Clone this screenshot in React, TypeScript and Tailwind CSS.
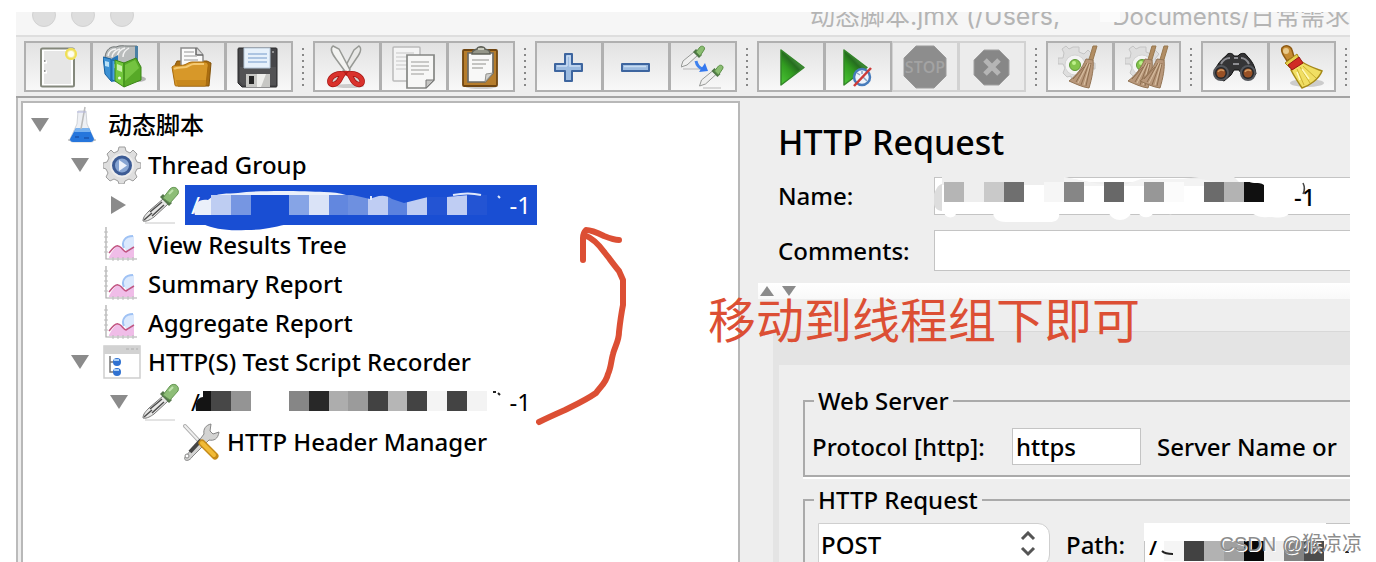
import React from 'react';
import { clsx } from 'clsx';

interface IconProps {
  className?: string;
}

interface SvgProps extends IconProps {
  size?: number;
  children: React.ReactNode;
}

const Svg: React.FC<SvgProps> = ({ size = 44, className, children }) => (
  <svg className={clsx('shrink-0', className)} width={size} height={size} viewBox={`0 0 ${size} ${size}`} fill="none" aria-hidden="true">
    {children}
  </svg>
);

// Toolbar icons, drawn on a 44x44 grid

const NewIcon = () => (
  <Svg>
    <rect x="5" y="3.500" width="33" height="38" rx="1.500" fill="#fff" stroke="#84887c" strokeWidth="2" />
    <rect x="8" y="6" width="27" height="33" fill="#e6e6e6" />
    <path d="M8 17h3M8 27h3" stroke="#fff" strokeWidth="3" />
    <path d="M8 16h1.500M8 26h1.500" stroke="#777" strokeWidth="1.500" />
    <circle cx="35" cy="9" r="6" fill="#f5ec9a" />
    <circle cx="35" cy="9" r="5" stroke="#efdf55" strokeWidth="2" />
    <circle cx="35" cy="9" r="3" fill="#fffef0" />
  </Svg>
);

const TemplatesIcon = () => (
  <Svg>
    <ellipse cx="35" cy="34" rx="8" ry="3" fill="#999" opacity=".7" />
    <path d="M2 12C3 4 8 1 13 2c4-2 8-1 11-1h10v17H14z" fill="#b9bcbc" stroke="#6f7474" />
    <path d="M5 11c1-5 4-7 8-7M9 12c1-5 4-7 8-8M14 12c1-5 4-8 8-9M20 12c0-5 3-7 6-9" stroke="#f2f2f2" strokeWidth="1.500" />
    <path d="M32 1h3v15h-3z" fill="#497fa4" />
    <path d="M0 12l8 2v22l-6-7z" fill="#3c91d4" stroke="#155f9e" />
    <path d="M8 14l7-4v26l-7 1z" fill="#2475b8" />
    <path d="M9 15l7 2v20l-7-2z" fill="#4aa1de" stroke="#1b69a8" />
    <path d="M2 16l4 1v5l-4-1zM11 19l4 1v4l-4-1z" fill="#b9e1f7" />
    <path d="M12 15l9 3v24l-9-6z" fill="#73c83d" stroke="#3d8a18" />
    <path d="M21 18l12-5 5 9v13l-17 7z" fill="#57a927" stroke="#3b8717" />
    <path d="M22 20l10-5 4 8-14 13z" fill="#80cf4c" opacity=".7" />
    <path d="M14 19l5 2v6l-5-2z" fill="#c9f2aa" />
    <circle cx="16.500" cy="33" r="1.500" fill="#efffe4" />
  </Svg>
);

const OpenIcon = () => (
  <Svg>
    <path d="M5 20l2-4h30l4 2-2 23H8z" fill="#a96e12" stroke="#835208" />
    <path d="M11 3h16l6 7v15H11z" fill="#fafafa" stroke="#8c8c8c" strokeWidth="1.500" />
    <path d="M26 3v7h7" fill="#ddd" stroke="#666" strokeWidth="1.500" />
    <path d="M14 7h10M14 11h13M14 15h14" stroke="#b8b8b8" strokeWidth="1.500" />
    <path d="M2 22c3-3 8-1 12-2 3-1 5-3 8-3h12c3 0 5 2 4 5l-2 18c0 1-1 1-2 1H7c-1 0-2 0-2-1z" fill="#d79829" stroke="#a76a0c" />
    <path d="M4 24c3-2 8-1 12-2 3-1 5-3 8-3h10" stroke="#f5c970" strokeWidth="2" />
    <path d="M6 35h30l-1 5H7z" fill="#b9770f" opacity=".5" />
  </Svg>
);

const SaveIcon = () => (
  <Svg>
    <path d="M2 3h37c1 0 1 1 1 1v37c0 1-1 1-1 1H5l-4-4V4c0-1 1-1 1-1z" fill="#464649" stroke="#29292b" />
    <path d="M3 22h36v18H6l-3-3z" fill="#5d5d60" opacity=".5" />
    <path d="M7 3h26v20H7z" fill="#e7f1fb" stroke="#b6c7d8" />
    <path d="M11 9h19M11 13h19M11 17h19" stroke="#9bb6da" strokeWidth="1.500" />
    <path d="M9 29h24v13H9z" fill="#c7c7c4" />
    <path d="M20 29h9l-5 13h-4z" fill="#efefec" />
    <rect x="12" y="31" width="5" height="8" fill="#262626" />
    <circle cx="36" cy="7" r="1" fill="#aaa" />
  </Svg>
);

const CutIcon = () => (
  <Svg>
    <ellipse cx="24" cy="41" rx="15" ry="2" fill="#ccc" />
    <path d="M34 1c4 3 0 9-3 13L21 29l-3-3L29 5z" fill="#e9e9e7" stroke="#979995" strokeWidth="1.500" />
    <path d="M8 1c-4 3 0 9 3 13l11 15 3-4L14 4z" fill="#f3f3f1" stroke="#979995" strokeWidth="1.500" />
    <path d="M16 28c3-3 7-3 11 0l-5 3z" fill="#c4211d" />
    <path d="M18 29c-5-1-11 1-13 6-1 4 2 5 5 4 5-1 5-7 8-10zM24 29c5-1 11 1 13 6 1 4-2 5-5 4-5-1-5-7-8-10z" fill="#d4d4d2" stroke="#a71916" strokeWidth="5.500" strokeLinejoin="round" />
    <path d="M18 29c-5-1-11 1-13 6-1 4 2 5 5 4 5-1 5-7 8-10zM24 29c5-1 11 1 13 6 1 4-2 5-5 4-5-1-5-7-8-10z" stroke="#d9322c" strokeWidth="4" strokeLinejoin="round" />
  </Svg>
);

const CopyIcon = () => (
  <Svg>
    <rect x="1" y="2" width="27" height="34" rx="1" fill="#f4f4f4" stroke="#bababa" strokeWidth="1.500" />
    <path d="M4 8h18M4 12h12M4 16h12M4 20h12M4 24h10" stroke="#d5d5d5" strokeWidth="1.500" />
    <path d="M15 10h27v25l-8 8H15z" fill="#f7f7f6" stroke="#858784" strokeWidth="1.700" />
    <path d="M34 43v-8h8z" fill="#c5c5c3" stroke="#777" />
    <path d="M19 17h18M19 21h18M19 25h18M19 29h13" stroke="#babab8" strokeWidth="1.500" />
  </Svg>
);

const PasteIcon = () => (
  <Svg>
    <ellipse cx="22" cy="42" rx="15" ry="2" fill="#ccc" />
    <rect x="4" y="5" width="34" height="36" rx="1" fill="#b67d2c" stroke="#704611" strokeWidth="1.800" />
    <path d="M9 8h25v20l-8 9H9z" fill="#f8f8f7" stroke="#6b6b67" strokeWidth="1.700" />
    <path d="M26 37l1-8 7-1z" fill="#d0d0cd" stroke="#94948e" />
    <path d="M13 15h17M13 19h14M13 23h11" stroke="#b3b3b0" strokeWidth="1.500" />
    <path d="M13 9c0-4 3-4 5-5 1-3 7-3 8 0 3 1 5 1 5 5z" fill="#949689" stroke="#5f6158" strokeWidth="1.500" />
    <path d="M19 4h6" stroke="#c9cbbf" strokeWidth="2" />
  </Svg>
);

const AddIcon = () => (
  <Svg>
    <path d="M18 9h7v10h10v7H25v10h-7V26H8v-7h10z" fill="#9cbbe0" stroke="#3d659f" strokeWidth="2" strokeLinejoin="round" />
    <path d="M20 11h3v10h10M10 21h10M20 11v10" stroke="#c7dcf2" strokeWidth="1.500" />
  </Svg>
);

const RemoveIcon = () => (
  <Svg>
    <rect x="8" y="19" width="27" height="7" fill="#9cbbe0" stroke="#3d659f" strokeWidth="2" strokeLinejoin="round" />
    <path d="M10 21.500h22" stroke="#c7dcf2" strokeWidth="1.500" />
  </Svg>
);

const ToggleIcon = () => (
  <Svg>
    <path d="M2 24h18M22 43h18" stroke="#b7b7b7" />
    <g>
      <path d="M0 22l2-6 11-9 4 3L6 20z" fill="#f0f0ef" stroke="#979997" />
      <path d="M12 7l3-3 6 6-3 3z" fill="#4e7546" />
      <path d="M15 7l4-5c2-2 6 0 4 3l-4 6z" fill="#8bbd72" stroke="#5c9147" />
    </g>
    <g transform="translate(18.500 19)">
      <path d="M0 22l2-6 11-9 4 3L6 20z" fill="#f0f0ef" stroke="#979997" />
      <path d="M12 7l3-3 6 6-3 3z" fill="#4e7546" />
      <path d="M15 7l4-5c2-2 6 0 4 3l-4 6z" fill="#8bbd72" stroke="#5c9147" />
    </g>
    <path d="M15 16c1 5 3 7 7 8" stroke="#3f82ee" strokeWidth="3" />
    <path d="M24 18l3 8-9 1z" fill="#3478ef" />
  </Svg>
);

const PlayGradient: React.FC<{ id: string }> = ({ id }) => (
  <defs>
    <linearGradient id={id} x1="0" y1="1" x2=".7" y2="0">
      <stop stopColor="#4cc936" />
      <stop offset=".45" stopColor="#319b20" />
      <stop offset=".65" stopColor="#256e1f" />
      <stop offset="1" stopColor="#79b970" />
    </linearGradient>
  </defs>
);

const StartIcon = () => (
  <Svg>
    <PlayGradient id="start" />
    <path d="M12 5v35l23-17.500z" fill="url(#start)" stroke="#338629" strokeWidth="1.500" strokeLinejoin="round" />
  </Svg>
);

const StartNoPausesIcon = () => (
  <Svg>
    <PlayGradient id="startNoPauses" />
    <path d="M8 5v35l23-17.500z" fill="url(#startNoPauses)" stroke="#338629" strokeWidth="1.500" strokeLinejoin="round" />
    <circle cx="26" cy="32" r="8" fill="#eef4fb" stroke="#477bbb" strokeWidth="2.500" />
    <path d="M21 28l3 2M26 26v3M27 32l4 4M22 36l2-1" stroke="#8aa3c0" strokeWidth="1.500" />
    <path d="M18 41l17-18" stroke="#cc3b39" strokeWidth="2.500" />
  </Svg>
);

const StopIcon = () => (
  <Svg>
    <path d="M13 1h18l12 12v18L31 43H13L1 31V13z" fill="#8d8d8d" stroke="#9a9a9a" />
    <text x="22" y="28" textAnchor="middle" fontSize="16" fontWeight="600" fontFamily="Open Sans, Liberation Sans, sans-serif" fill="#a3a3a3">
      STOP
    </text>
  </Svg>
);

const ShutdownIcon = () => (
  <Svg>
    <path d="M14 5h15l10 10v15L29 40H14L4 30V15z" fill="#878787" stroke="#a0a0a0" />
    <path d="M15 15l14 14M29 15L15 29" stroke="#b5b5b5" strokeWidth="5" />
  </Svg>
);

const Cog = () => (
  <g>
    <path d="M15 2h6v5l5 2 4-4 4 4-4 5 2 4h5v6h-5l-2 5 3 4-4 4-4-3-5 2H14l-1-5-4 1-4-4 2-5-2-4H0v-6h5l1-5-2-4 4-3 3 3 4-2z" fill="#dedede" stroke="#c4c4c4" />
    <circle cx="17" cy="20" r="10" fill="#f4f4f4" stroke="#d4d4d4" />
    <circle cx="17" cy="20" r="5.500" fill="#84c54c" stroke="#5e9a34" />
    <circle cx="16" cy="18" r="2" fill="#bff18c" />
  </g>
);

const Besom: React.FC<{ x: number }> = ({ x }) => (
  <g transform={`translate(${x} 0)`}>
    <path d="M35 1h4l-5 17h-4z" fill="#b18d63" stroke="#98784f" />
    <path d="M28 14l7 1c1 8-1 18-4 28-7-1-13-4-20-7 8-6 13-13 17-22z" fill="#b8977a" stroke="#937454" />
    <path d="M29 18L18 37M31 18l-8 22M33 18l-5 23M26 22L15 34" stroke="#8f6f50" />
    <path d="M30 18L20 38M32 19l-6 21" stroke="#dbc3a5" />
  </g>
);

const ClearIcon = () => (
  <Svg>
    <Cog />
    <Besom x={0} />
  </Svg>
);

const ClearAllIcon = () => (
  <Svg>
    <Cog />
    <Besom x={-8} />
    <Besom x={4} />
  </Svg>
);

const SearchIcon = () => (
  <Svg>
    <path d="M13 11c2-4 7-3 8 0h4c2-3 7-4 9 0 5 5 8 10 9 18l-7 6-7-5-3-5h-5l-3 5-7 6-9-4c-3-6 5-17 11-21z" fill="#343436" stroke="#111" />
    <path d="M8 19c2-4 5-6 9-6M36 19c-2-4-4-6-8-6M21 13h4M20 19h6" stroke="#8d8d92" strokeWidth="2" />
    <circle cx="8" cy="28" r="7" fill="#25272a" stroke="#54565b" strokeWidth="2" />
    <circle cx="8" cy="28" r="4.500" fill="#985126" />
    <path d="M5 27c1-2 4-3 6-1" stroke="#d39a61" strokeWidth="1.500" />
    <circle cx="35" cy="28" r="7" fill="#25272a" stroke="#54565b" strokeWidth="2" />
    <circle cx="35" cy="28" r="4.500" fill="#985126" />
    <path d="M32 27c1-2 4-3 6-1" stroke="#d39a61" strokeWidth="1.500" />
  </Svg>
);

const ResetSearchIcon = () => (
  <Svg>
    <ellipse cx="27" cy="38" rx="17" ry="4" fill="#bbb" opacity=".7" />
    <path d="M2 3c3-4 9-2 10 2l2 7-7 4c-2-4-7-9-5-13z" fill="#c58a32" stroke="#8e5a13" strokeWidth="1.500" />
    <circle cx="6" cy="6" r="3" fill="#e8c98b" />
    <path d="M5 18l12-9 3 6-10 8z" fill="#e6ce4b" stroke="#a28617" />
    <path d="M22 17c6 4 12 6 20 9-3 8-13 15-20 17-4-6-8-12-11-18z" fill="#f1df63" stroke="#a68a17" strokeWidth="1.500" />
    <path d="M17 24l7 16M20 22l10 16M23 21l13 12" stroke="#ccb133" />
    <path d="M17 27l3 8M22 24l7 10" stroke="#fff9ba" strokeWidth="1.500" />
    <path d="M8 20l11-8 4 6-11 7z" fill="#d02c25" stroke="#991815" />
  </Svg>
);

// Tree icons, drawn on a 38x38 grid

const TestPlanIcon = () => (
  <Svg size={38}>
    <ellipse cx="19" cy="34" rx="14" ry="2" fill="#a9a9a9" />
    <path d="M15 5h8l1 13 7 15c0 3-2 3-3 3H10c-2 0-3-1-3-3l7-15z" fill="#eef0f4" stroke="#d0d3d8" />
    <path d="M13 22h13l5 11c0 2-2 3-3 3H10c-2 0-3-1-3-3z" fill="#2676dc" />
    <path d="M13 22h13l2 4H11z" fill="#79b2ef" />
    <path d="M12 31h4M21 32h5" stroke="#1c5cba" strokeWidth="2" />
    <path d="M22 1l-4 22" stroke="#bbb" strokeWidth="1.500" />
    <path d="M14 6h9" stroke="#b5b8e0" />
  </Svg>
);

const ThreadGroupIcon = () => (
  <Svg size={38}>
    <path d="M16 1h6l1 4 4 2 3-3 4 4-2 4 2 4 4 1v5l-4 1-2 4 2 4-4 4-4-2-4 2-1 3h-5l-1-3-4-2-4 2-4-4 2-4-2-4-3-1v-5l4-1 2-4-2-4 4-4 3 3 4-2z" fill="#dedede" stroke="#9d9d9d" />
    <circle cx="19" cy="19.500" r="12" fill="#ececec" />
    <circle cx="19" cy="19.500" r="8.500" fill="#87a5d3" stroke="#3c5b94" strokeWidth="3" />
    <path d="M16 14v11l8-5.500z" fill="#eef3fb" />
  </Svg>
);

const SamplerIcon = () => (
  <Svg size={38}>
    <path d="M3 37h30" stroke="#c8c8c8" />
    <path d="M1 35c0-4 3-7 6-10l14-12 5 5-14 13c-3 2-7 5-11 4z" fill="#e7e7e6" stroke="#777" />
    <path d="M2 34l8-7M10 30l12-11M8 26l12-10" stroke="#4d4d4d" strokeWidth="1.500" />
    <path d="M18 11l3-3 9 9-3 3z" fill="#55774c" />
    <path d="M21 12l7-9c4-4 10 0 8 5l-8 9z" fill="#8dbd77" stroke="#659653" />
    <path d="M27 8l4-4" stroke="#bfe2ad" strokeWidth="2" />
  </Svg>
);

const ReportIcon = () => (
  <Svg size={38}>
    <path d="M6 31c3-6 6-9 8-11l8 5 9-4v11H6z" fill="#f0bde8" />
    <path d="M31 10c-8 0-12 6-9 13l3 3 6-4z" fill="#dbe9fd" />
    <path d="M30 10c-8 0-12 6-9 12" stroke="#9fc2f4" strokeWidth="2" />
    <path d="M6 27c4-5 7-8 9-7 3 0 6 6 8 6l8-5" stroke="#c25482" strokeWidth="1.500" />
    <path d="M3 1v32h31" stroke="#aaa" strokeWidth="1.200" />
    <path d="M1 6h4M1 11h4M1 16h4M1 21h4M1 26h4M10 31v4M15 31v4M20 31v4M25 31v4M30 31v4" stroke="#bcbcbc" />
  </Svg>
);

const RecorderIcon = () => (
  <Svg size={38}>
    <rect x="1" y="3" width="36" height="32" fill="#fff" stroke="#cecece" strokeWidth="1.500" />
    <rect x="1" y="3" width="36" height="8" fill="#d2d2d2" />
    <path d="M23 6h3M28 6h3M33 6h2" stroke="#bbb" strokeWidth="1.500" />
    <path d="M7 13v16h5M7 19h5" stroke="#777" strokeWidth="1.500" />
    <circle cx="14" cy="19" r="4" fill="#2f71d1" />
    <circle cx="14" cy="29" r="4" fill="#2f71d1" />
    <path d="M11 17h5M11 27h5" stroke="#a9cef6" strokeWidth="2" />
  </Svg>
);

const HeaderManagerIcon = () => (
  <Svg size={38}>
    <path d="M3 3l15 16" stroke="#aaa" strokeWidth="4" strokeLinecap="round" />
    <path d="M3 3l15 16" stroke="#efefef" strokeWidth="2" strokeLinecap="round" />
    <path d="M3 34l13-15 6-8c-1-5 2-9 7-10l-1 7 3 3 6-2c-1 7-5 9-10 8L10 34c-3 5-9 4-7 0z" fill="#d3d3d2" stroke="#868686" />
    <path d="M8 29l11-12" stroke="#454545" strokeWidth="4" />
    <circle cx="5" cy="33" r="2" fill="#fff" stroke="#888" />
    <path d="M20 20l13 13" stroke="#c58b19" strokeWidth="7" strokeLinecap="round" />
    <path d="M20 20l12 12" stroke="#f1bb37" strokeWidth="4" strokeLinecap="round" />
  </Svg>
);

interface ToolItem {
  label: string;
  icon: React.FC;
  disabled?: boolean;
}

const toolGroups: ToolItem[][] = [
  [
    { label: 'New', icon: NewIcon },
    { label: 'Templates', icon: TemplatesIcon },
    { label: 'Open', icon: OpenIcon },
    { label: 'Save', icon: SaveIcon },
  ],
  [
    { label: 'Cut', icon: CutIcon },
    { label: 'Copy', icon: CopyIcon },
    { label: 'Paste', icon: PasteIcon },
  ],
  [
    { label: 'Expand All', icon: AddIcon },
    { label: 'Collapse All', icon: RemoveIcon },
    { label: 'Toggle', icon: ToggleIcon },
  ],
  [
    { label: 'Start', icon: StartIcon },
    { label: 'Start no pauses', icon: StartNoPausesIcon },
    { label: 'Stop', icon: StopIcon, disabled: true },
    { label: 'Shutdown', icon: ShutdownIcon, disabled: true },
  ],
  [
    { label: 'Clear', icon: ClearIcon },
    { label: 'Clear All', icon: ClearAllIcon },
  ],
  [
    { label: 'Search', icon: SearchIcon },
    { label: 'Reset Search', icon: ResetSearchIcon },
  ],
];

const ToolSeparator = () => (
  <div className="flex w-5 shrink-0 flex-col items-center gap-1">
    {[0, 1, 2, 3, 4, 5, 6].map((dot) => (
      <span key={dot} className="h-0.5 w-0.5 bg-[#888]" />
    ))}
  </div>
);

const Toolbar = () => (
  <div className="flex shrink-0 items-center overflow-hidden border-b-2 border-[#a3a3a3] bg-[#eee] pt-1 pb-1 pl-2">
    {toolGroups.map((group, index) => (
      <React.Fragment key={index}>
        <div className="flex shrink-0 pl-px">
          {group.map(({ label, icon: Icon, disabled }) => (
            <button
              key={label}
              type="button"
              aria-label={label}
              disabled={disabled}
              className={clsx(
                '-ml-px flex h-[51px] w-17 items-center justify-center border-2',
                disabled
                  ? 'border-[#d2d2d2] bg-[#ececec]'
                  : 'relative border-[#b0b0b0] bg-linear-to-b from-[#e2e2e2] to-[#f8f8f8]'
              )}
            >
              <Icon />
            </button>
          ))}
        </div>
        <ToolSeparator />
      </React.Fragment>
    ))}
  </div>
);

const TitleBar = () => (
  <div className="flex h-[25px] shrink-0 items-end justify-between overflow-hidden border-b-2 border-[#dedede] bg-[#f6f6f6]">
    <div className="mb-2 flex gap-[15px] pl-4">
      {[0, 1, 2].map((dot) => (
        <span key={dot} className="h-6 w-6 rounded-full border border-[#d2d2d2] bg-[#dedede]" />
      ))}
    </div>
    <div className="flex font-['Inter','Noto_Sans_CJK_SC',sans-serif] text-[25px] leading-9 whitespace-nowrap text-[#b4b4b4]">
      <span>动态脚本.jmx (/Users,</span>
      <span className="relative ml-[52px]">
        <span className="text-2xl leading-9">Documents/</span>日常需求
        <span className="absolute top-0 -left-3 h-6 w-5 bg-[#fbfbfb]" />
      </span>
    </div>
  </div>
);

interface Cell {
  x: number;
  w?: number;
  fill: string;
}

const selectedCells: Cell[] = [
  { x: 26, fill: '#becdf2' },
  { x: 46, fill: '#7696e2' },
  { x: 104, fill: '#86a4e6' },
  { x: 124, fill: '#dae3f7' },
  { x: 144, fill: '#6287df' },
  { x: 163, fill: '#6e90e0' },
  { x: 183, fill: '#bfcdf3' },
  { x: 203, fill: '#5b82df' },
  { x: 222, fill: '#bfcdf3' },
  { x: 242, fill: '#2354d3' },
  { x: 262, fill: '#bfcdf3' },
  { x: 282, fill: '#2354d3' },
];

const recordedCells: Cell[] = [
  { x: 26, fill: '#474747' },
  { x: 46, fill: '#949494' },
  { x: 104, fill: '#868686' },
  { x: 124, fill: '#282828' },
  { x: 144, fill: '#adadad' },
  { x: 163, fill: '#9b9b9b' },
  { x: 183, fill: '#424242' },
  { x: 203, fill: '#b6b6b6' },
  { x: 222, fill: '#434343' },
  { x: 242, fill: '#f4f4f4' },
  { x: 262, fill: '#434343' },
  { x: 282, fill: '#f3f3f3' },
];

const Cells: React.FC<{ cells: Cell[]; y: number }> = ({ cells, y }) => (
  <>
    {cells.map(({ x, w = 20, fill }) => (
      <rect key={x} x={x} y={y} width={w} height="20" fill={fill} />
    ))}
  </>
);

// Sampler paths with the host and route hidden behind a mosaic
const SelectedPath = () => (
  <span className="relative flex h-10 w-[352px] items-center justify-between bg-[#194ed3] px-1.5 text-white">
    <span>/</span>
    <span>-1</span>
    <svg className="absolute top-0 left-0" width="352" height="46" viewBox="0 0 352 46" aria-hidden="true">
      <path d="M18 39h86c-13 2-21 6-43 6-19 1-32-1-43-6z" fill="#194ed3" />
      <path d="M10 30c-4-9 3-17 13-15 8-8 20-6 30-7 22-3 65-2 86-1 8 0 16 1 22 3v3H66v17z" fill="#ebf0fa" />
      <path d="M66 10h94v20H66z" fill="#194ed3" />
      <Cells cells={selectedCells} y={10} />
      <path d="M163 9l22 5c5-2 14-6 22 0l12 4 24-6h19l22-2V6H163z" fill="#194ed3" />
      <path d="M186 11v4M268 10c10-2 20-2 28 0M313 11l2 2" stroke="#dfe8fb" strokeWidth="2" fill="none" />
    </svg>
  </span>
);

const RecordedPath = () => (
  <span className="relative flex h-10 w-[352px] items-center justify-between px-1.5">
    <span>/</span>
    <span>-1</span>
    <svg className="absolute top-0 left-0" width="352" height="40" viewBox="0 0 352 40" aria-hidden="true">
      <path d="M11 29c-1-7 0-13 7-14V9h9v20z" fill="#141414" />
      <Cells cells={recordedCells} y={9} />
      <path d="M308 10h3M313 11l2 2" stroke="#222" strokeWidth="2" />
    </svg>
  </span>
);

const Arrow: React.FC<{ open: boolean }> = ({ open }) => (
  <svg className="w-[18px] shrink-0" width="18" height="18" viewBox="0 0 18 18" aria-hidden="true">
    <path d={open ? 'M0 2h18L9 16z' : 'M1 0v18l15-9z'} fill="#8b8b8b" />
  </svg>
);

interface TreeRow {
  indent: string;
  icon: React.FC;
  label: React.ReactNode;
  // undefined for a leaf
  open?: boolean;
  mosaic?: boolean;
}

const rows: TreeRow[] = [
  { indent: 'pl-2', icon: TestPlanIcon, label: '动态脚本', open: true },
  { indent: 'pl-12', icon: ThreadGroupIcon, label: 'Thread Group', open: true },
  { indent: 'pl-[87px]', icon: SamplerIcon, label: <SelectedPath />, open: false, mosaic: true },
  { indent: 'pl-12', icon: ReportIcon, label: 'View Results Tree' },
  { indent: 'pl-12', icon: ReportIcon, label: 'Summary Report' },
  { indent: 'pl-12', icon: ReportIcon, label: 'Aggregate Report' },
  { indent: 'pl-12', icon: RecorderIcon, label: 'HTTP(S) Test Script Recorder', open: true },
  { indent: 'pl-[87px]', icon: SamplerIcon, label: <RecordedPath />, open: true, mosaic: true },
  { indent: 'pl-[127px]', icon: HeaderManagerIcon, label: 'HTTP Header Manager' },
];

const TestTree = () => (
  <div className="w-181 shrink-0 border-l-2 border-[#bbb] pt-[3px] pl-[3px]">
    <ul className="h-full border-2 border-b-0 border-[#b8b8b8] bg-white pt-0.5 text-2xl">
      {rows.map(({ indent, icon: Icon, label, open, mosaic }, index) => (
        <li key={index} className={clsx('flex items-center whitespace-nowrap', open === undefined ? 'h-[39px]' : 'h-10', indent)}>
          {open === undefined ? <span className="w-[18px]" /> : <Arrow open={open} />}
          <span className="ml-3.5 flex">
            <Icon />
          </span>
          <span className={mosaic ? 'ml-[5px]' : 'ml-[7px] font-medium'}>{label}</span>
        </li>
      ))}
    </ul>
  </div>
);

const nameCells: Cell[] = [
  { x: 10, fill: '#b5b5b5' },
  { x: 30, fill: '#eee' },
  { x: 50, fill: '#c9c9c9' },
  { x: 70, fill: '#6f6f6f' },
  { x: 110, fill: '#f6f6f6' },
  { x: 130, fill: '#868686' },
  { x: 170, fill: '#686868' },
  { x: 210, fill: '#979797' },
  { x: 230, fill: '#fbfbfb' },
  { x: 270, fill: '#6b6b6b' },
  { x: 290, fill: '#b3b3b3' },
  { x: 310, fill: '#101010' },
];

const NameMosaic = () => (
  <svg className="absolute top-0 left-0" width="416" height="46" viewBox="0 0 416 46" aria-hidden="true">
    <path d="M8 0h122l25 5h70l40-5h35l8 8H8z" fill="#eee" />
    <path d="M130 0l25 5c10 2 25 4 38 2l14-5h60l20 4-10 3H130z" fill="#f3f3f3" />
    <path d="M10 34h12c2 8-12 9-12 0zM59 34h66c2 12-8 11-14 11H72c-9 0-13-4-13-11zM174 34h24c-4 12-20 12-24 0zM204 35h16c-3 7-13 7-16 0zM231 35h11c-2 3-9 3-11 0zM316 35h40c-4 8-16 5-22 5-9 1-13-2-18-5z" fill="#fff" />
    <path d="M0 17c2-5 4-9 8-10v27c-5 0-8-4-8-8z" fill="#ddd" />
    <Cells cells={nameCells} y={5} />
    <path d="M314 4c6 4 10 0 16 4V4z" fill="#fff" />
    <path d="M369 6c2 4 2 7 0 11" stroke="#444" strokeWidth="1.500" fill="none" />
  </svg>
);

const pathCells: Cell[] = [
  { x: 20, fill: '#f5f5f5' },
  { x: 40, fill: '#424242' },
  { x: 60, fill: '#b2b2b2' },
  { x: 80, fill: '#a0a0a0' },
  { x: 100, fill: '#080808' },
  { x: 120, fill: '#eee' },
  { x: 140, fill: '#838383' },
  { x: 160, fill: '#4c4c4c' },
];

const inputClass = 'min-w-0 border border-[#c4c4c4] bg-white font-medium outline-none';

const RequestPanel = () => (
  <div className="flex min-w-0 flex-1 flex-col overflow-hidden bg-[#eee] text-2xl font-medium whitespace-nowrap">
    <h1 className="mt-[21px] ml-[38px] text-[34px] leading-[46px]">HTTP Request</h1>
    <div className="mt-3 ml-[38px] flex items-center">
      <label htmlFor="name" className="w-[156px] shrink-0">Name:</label>
      <div className="relative flex flex-1">
        <input id="name" defaultValue="-1" className={clsx(inputClass, 'h-[38px] w-full border-r-0 pl-[359px]')} />
        <NameMosaic />
      </div>
    </div>
    <div className="mt-[15px] ml-[38px] flex items-center">
      <label htmlFor="comments" className="w-[156px] shrink-0">Comments:</label>
      <input id="comments" className={clsx(inputClass, 'h-[41px] flex-1 border-r-0')} />
    </div>
    <div className="mt-3 ml-[18px] flex h-4 shrink-0 items-center gap-2 bg-linear-to-b from-white to-[#f9f9f9] pl-0.5">
      <svg width="14" height="10" viewBox="0 0 14 10" aria-hidden="true"><path d="M7 0l7 10H0z" fill="#8b8b8b" /></svg>
      <svg width="14" height="10" viewBox="0 0 14 10" aria-hidden="true"><path d="M0 0h14L7 10z" fill="#8b8b8b" /></svg>
    </div>
    <div className="mt-8 ml-[33px] flex-1 border-t border-[#d8d8d8] bg-[#e4e4e4] pt-[33px] pl-1.5">
      <div className="h-full bg-[#eee] pt-5 pl-6">
        <fieldset className="h-[92px] border-2 border-r-0 border-[#aaa] pl-[7px] shadow-[0_2px_0_#fff]">
          <legend className="ml-0.5 px-1 leading-8">Web Server</legend>
          <div className="mt-[11px] flex items-center">
            <label htmlFor="protocol" className="w-[200px] shrink-0">Protocol [http]:</label>
            <input id="protocol" defaultValue="https" className={clsx(inputClass, 'mr-4 h-[37px] w-[129px] pl-[3px]')} />
            <span>Server Name or</span>
          </div>
        </fieldset>
        <fieldset className="mt-[7px] h-40 border-2 border-r-0 border-[#aaa] pl-[13px]">
          <legend className="-ml-1 px-1 leading-8">HTTP Request</legend>
          <div className="mt-[7px] flex items-center">
            <div className="relative mr-4 shrink-0">
              <select aria-label="Method" className="h-11 w-[232px] appearance-none rounded-r-xl border border-[#cfcfcf] bg-white pl-0.5 text-2xl font-medium outline-none">
                <option>POST</option>
                <option>GET</option>
              </select>
              <svg className="pointer-events-none absolute top-2 right-3.5" width="16" height="26" viewBox="0 0 16 26" fill="none" aria-hidden="true">
                <path d="M2 8l6-6 6 6M2 17l6 6 6-6" stroke="#555" strokeWidth="3" />
              </svg>
            </div>
            <label htmlFor="path" className="w-[78px] shrink-0">Path:</label>
            <div className="relative flex flex-1">
              <input id="path" defaultValue="/" className={clsx(inputClass, 'h-11 w-full border-r-0 pl-1')} />
              <svg className="absolute top-0 left-0" width="206" height="44" viewBox="0 0 206 44" aria-hidden="true">
                <path d="M0 0h182v18H0z" fill="#fff" />
                <Cells cells={pathCells} y={18} />
                <path d="M18 28c3 3 7 3 11 3M201 29h4" stroke="#222" strokeWidth="2" fill="none" />
              </svg>
            </div>
          </div>
        </fieldset>
      </div>
    </div>
  </div>
);

// Hand-drawn note: drag the recorded sampler under the thread group
const Annotation = () => (
  <>
    <svg className="pointer-events-none absolute top-[226px] left-[536px]" width="92" height="202" viewBox="0 0 92 202" fill="none" aria-hidden="true">
      <path d="M3 196c8-4 17-8 26-12 10-5 21-10 31-17 5-7 10-10 12-19 3-6 3-13 5-20 2-8 6-13 6-22 1-9 2-17 4-27V54l-4-9c-5-6-10-13-14-18-5-7-12-15-21-18" stroke="#dc4f34" strokeWidth="6" strokeLinecap="round" strokeLinejoin="round" />
      <path d="M47 34V12c0-4 1-6 3-8 6 0 12 3 18 6 5 2 10 4 15 4" stroke="#dc4f34" strokeWidth="6" strokeLinecap="round" strokeLinejoin="round" />
    </svg>
    <p className="pointer-events-none absolute top-[291px] left-[708px] text-5xl leading-[58px] whitespace-nowrap text-[#dc4f34]">移动到线程组下即可</p>
  </>
);

export default function App() {
  return (
    <div className="relative h-screen overflow-hidden bg-white pt-3 pr-[26px] pl-4 font-['Noto_Sans','Noto_Sans_CJK_SC',sans-serif] text-black">
      <div className="flex h-full flex-col">
        <TitleBar />
        <Toolbar />
        <div className="flex min-h-0 flex-1 bg-[#eee]">
          <TestTree />
          <RequestPanel />
        </div>
      </div>
      <Annotation />
      <p className="pointer-events-none absolute right-3.5 bottom-1 font-['Liberation_Sans','Noto_Sans_CJK_SC',sans-serif] text-xl text-[#8c8c8c] [text-shadow:1px_1px_0_#fff]">CSDN @猴凉凉</p>
    </div>
  );
}
